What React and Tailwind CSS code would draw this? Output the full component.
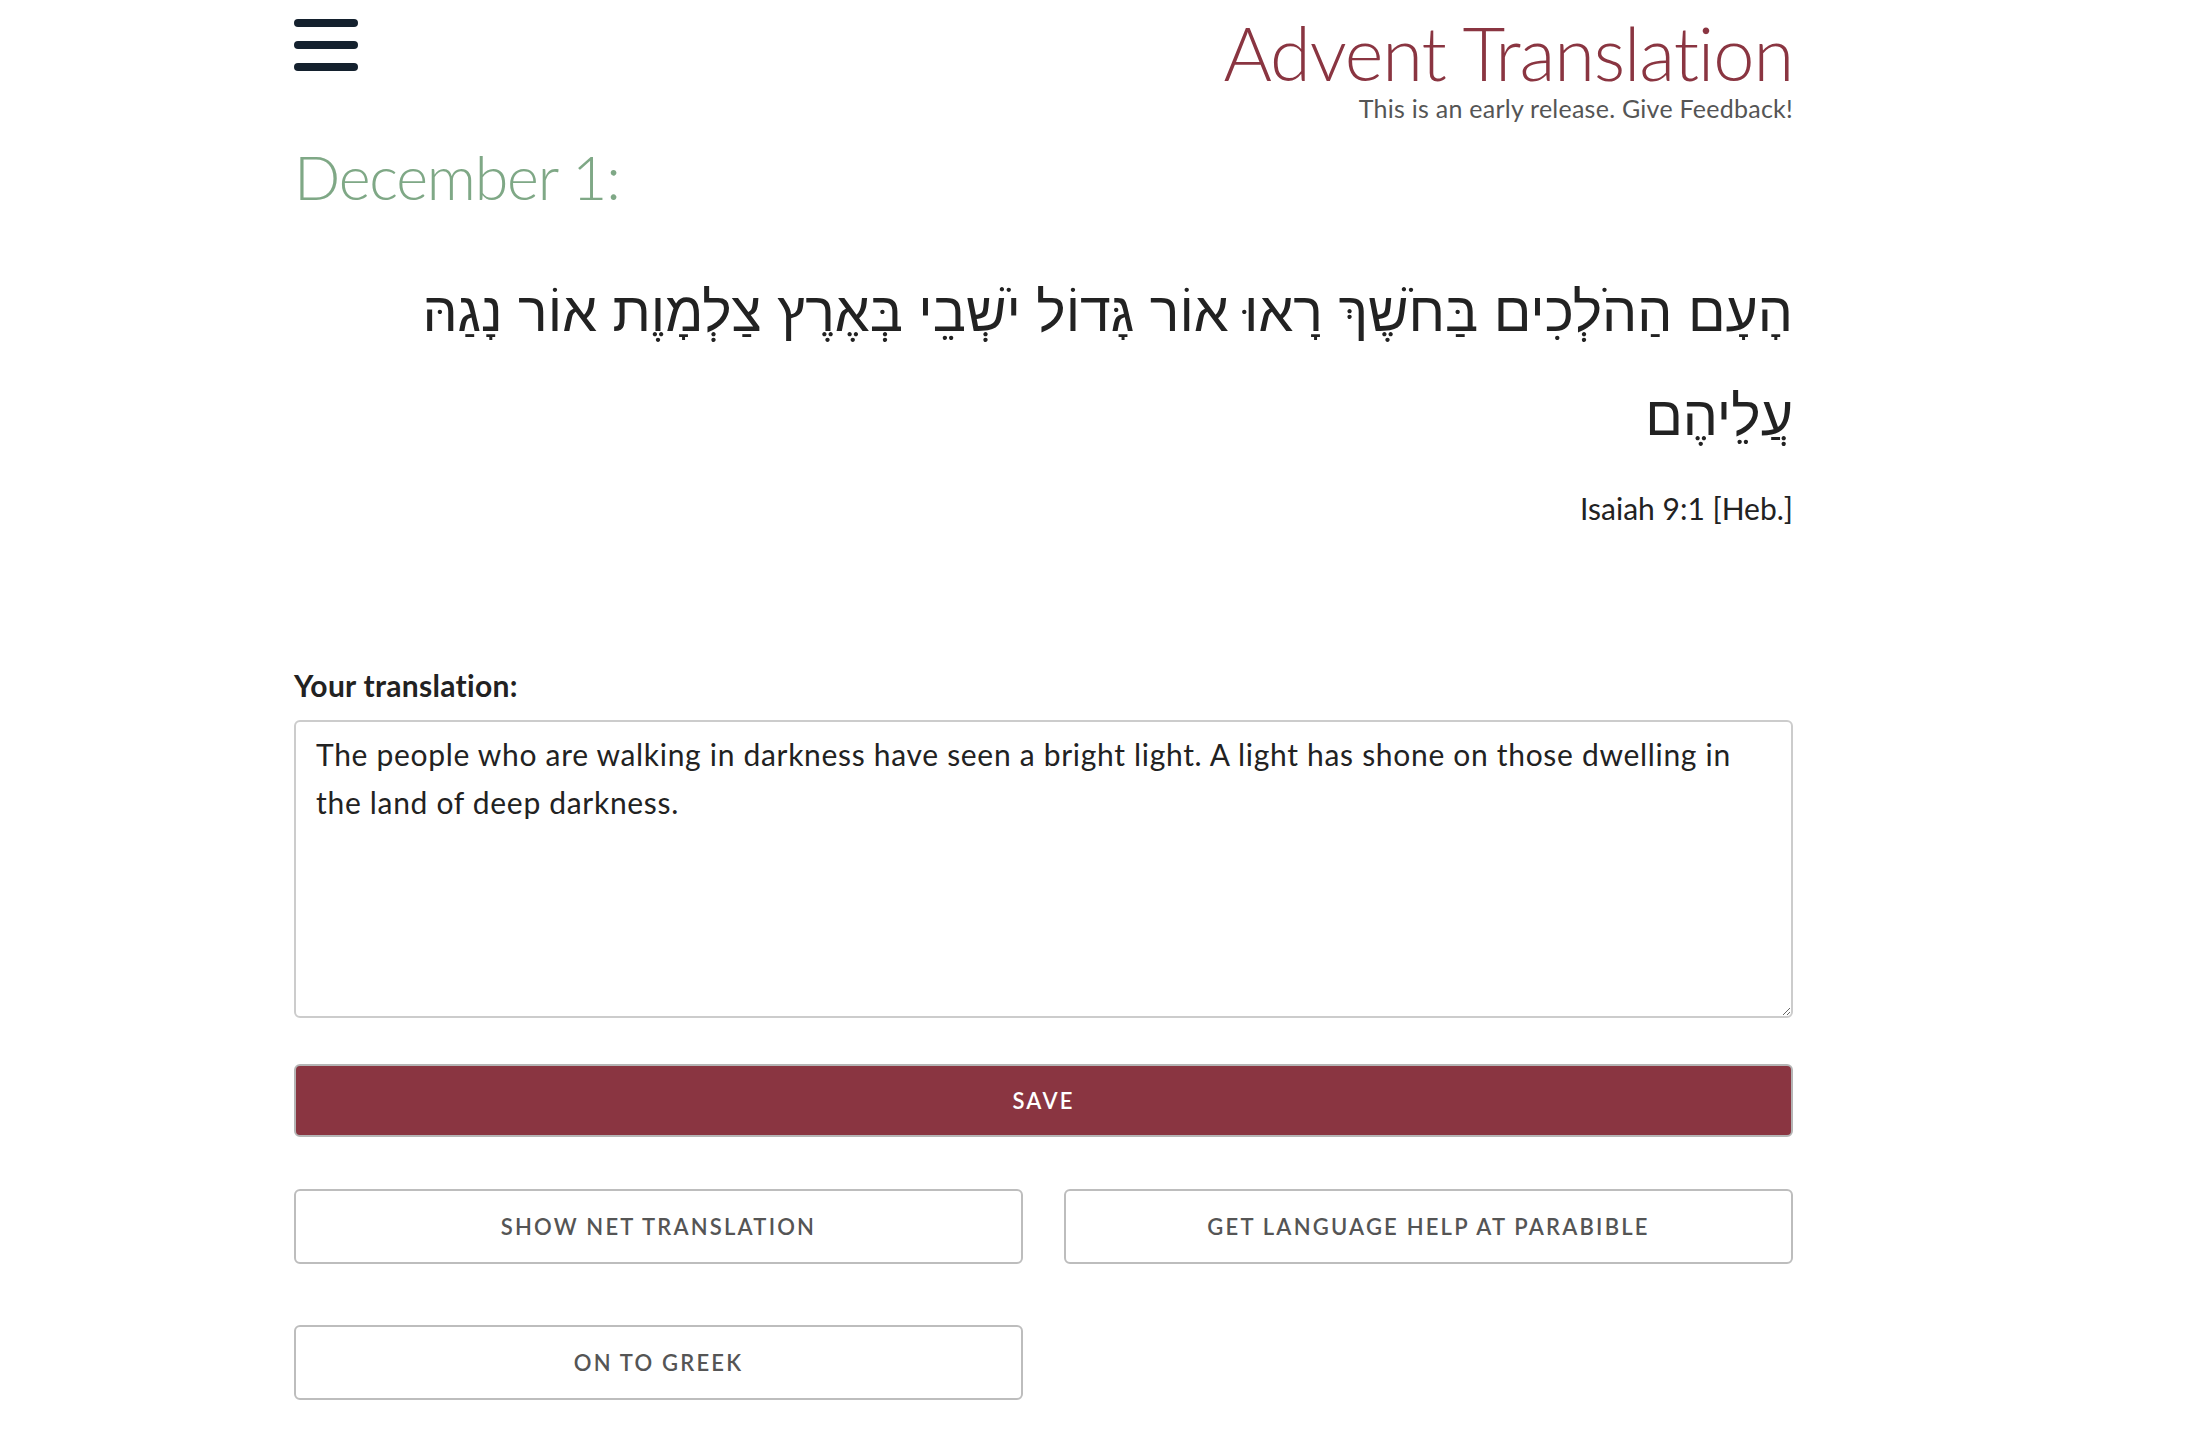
import { useState } from 'react'

const VERSE =
  'הָעָם הַהֹלְכִים בַּחֹשֶׁךְ רָאוּ אוֹר גָּדוֹל יֹשְׁבֵי בְּאֶרֶץ צַלְמָוֶת אוֹר נָגַהּ עֲלֵיהֶם'

const START_TEXT =
  'The people who are walking in darkness have seen a bright light. A light has shone on those dwelling in the land of deep darkness.'

function Hamburger() {
  return (
    <button className="mt-[3px] flex w-[64px] flex-col gap-[14px]" aria-label="Menu">
      <span className="block h-[8px] w-full rounded-full bg-[#14212e]" />
      <span className="block h-[8px] w-full rounded-full bg-[#14212e]" />
      <span className="block h-[8px] w-full rounded-full bg-[#14212e]" />
    </button>
  )
}

function OutlineButton({ children, className = '' }) {
  return (
    <button
      className={`h-[75px] rounded-md border-2 border-[#bdbdbd] bg-white text-[22px] font-semibold uppercase tracking-[0.1em] text-[#555] ${className}`}
    >
      {children}
    </button>
  )
}

export default function App() {
  const [text, setText] = useState(START_TEXT)

  return (
    <div className="min-h-screen bg-white font-['Lato','Open_Sans',sans-serif] text-[#222]">
      <div className="ml-[294px] w-[1499px] pb-[38px]">
        {/* Header */}
        <header className="flex items-start justify-between pt-[16px]">
          <Hamburger />
          <div className="text-right">
            <h1 className="text-[74px] font-light leading-none tracking-[-0.015em] text-[#8a3541]">
              Advent Translation
            </h1>
            <p className="mt-[2px] text-[25px] leading-[32px] tracking-[0.01em] text-[#555]">
              This is an early release. Give Feedback!
            </p>
          </div>
        </header>

        <h2 className="mt-[22px] text-[61px] font-light leading-none tracking-[-0.02em] text-[#7fa886]">
          December 1:
        </h2>

        <p
          dir="rtl"
          className="mt-[53px] text-right font-['Liberation_Sans','DejaVu_Sans',sans-serif] text-[55.5px] leading-[104px] text-[#222]"
        >
          {VERSE}
        </p>

        <p className="mt-[22px] text-right text-[30px] leading-[36px]">Isaiah 9:1 [Heb.]</p>

        <label
          htmlFor="translation"
          className="mt-[141px] block text-[30px] font-bold leading-[1.2] tracking-[0.01em]"
        >
          Your translation:
        </label>
        <textarea
          id="translation"
          value={text}
          onChange={(e) => setText(e.target.value)}
          className="mt-[17px] block h-[298px] w-full rounded-md border-2 border-[#cccccc] px-[20px] pt-[8px] text-[30px] leading-[48px] tracking-[0.023em] text-[#222] outline-none"
        />

        <button className="mt-[46px] block h-[73px] w-full rounded-md border-2 border-[#b5b5b5] bg-[#8a3541] text-[22px] font-semibold uppercase tracking-[0.1em] text-white">
          Save
        </button>

        <div className="mt-[52px] grid grid-cols-2 gap-[41px]">
          <OutlineButton>Show NET Translation</OutlineButton>
          <OutlineButton>Get Language Help at Parabible</OutlineButton>
        </div>

        <OutlineButton className="mt-[61px] block w-[729px]">On to Greek</OutlineButton>
      </div>
    </div>
  )
}
